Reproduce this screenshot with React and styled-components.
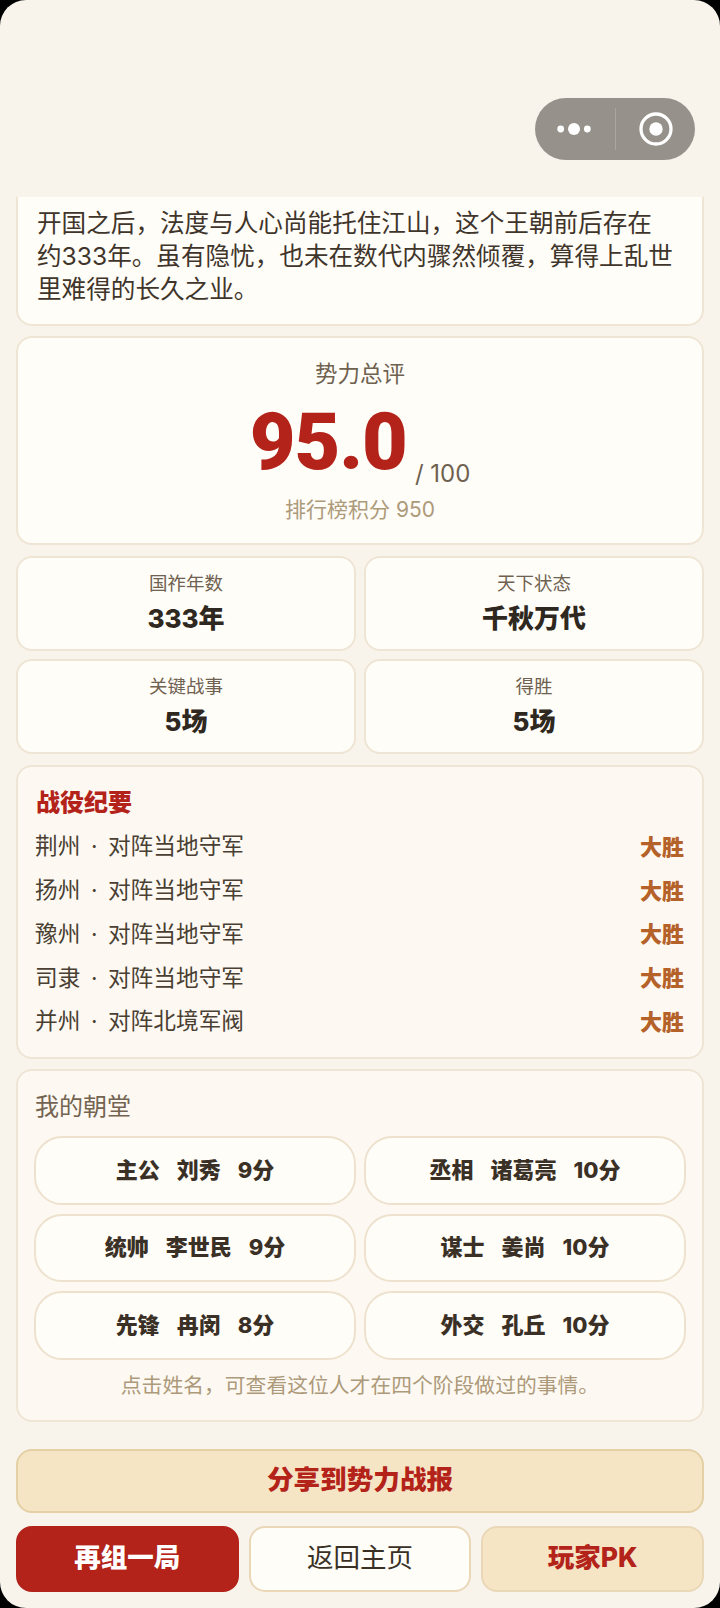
import React from "react";
import styled, { createGlobalStyle } from "styled-components";

const GlobalStyle = createGlobalStyle`
  html, body {
    margin: 0;
    padding: 0;
    background: #000;
  }
  * {
    box-sizing: border-box;
  }
`;

const Page = styled.div`
  width: 720px;
  height: 1608px;
  overflow: hidden;
  border-radius: 26px;
  background: #f8f4ec;
  font-family: "Inter", "Noto Sans CJK SC", sans-serif;
  color: #3a3026;
`;

const NavBar = styled.div`
  height: 197px;
  padding: 98px 25px 0 0;
  display: flex;
  justify-content: flex-end;
  align-items: flex-start;
`;

const Capsule = styled.div`
  width: 160px;
  height: 62px;
  border-radius: 31px;
  background: #96928b;
  display: flex;
  align-items: center;
`;

const CapsulePart = styled.div`
  flex: 1;
  display: flex;
  align-items: center;
  justify-content: center;
  padding: ${(p) => (p.$side === "left" ? "0 2px 0 0" : "0 0 0 2px")};
`;

const CapsuleLine = styled.div`
  width: 1px;
  height: 42px;
  background: #aaa69f;
`;

const Content = styled.div`
  padding: 0 16px;
  display: flex;
  flex-direction: column;
`;

const Card = styled.div`
  background: ${(p) => (p.$tint ? "#fdf9f2" : "#fffdf8")};
  border: 2px solid #efe5d5;
  border-radius: 16px;
  margin-top: ${(p) => p.$gap ?? 11}px;
`;

const StoryCard = styled(Card)`
  margin-top: 0;
  border-top: none;
  border-radius: 0 0 16px 16px;
  height: 129px;
  padding: 10px 26px 0 19px;
  font-size: 24.6px;
  line-height: 33px;
  color: #3f352b;
`;

const ScoreCard = styled(Card)`
  height: 209px;
  padding-top: 20px;
  text-align: center;
`;

const ScoreTitle = styled.div`
  font-size: 22.5px;
  line-height: 32px;
  color: #6f6150;
`;

const ScoreRow = styled.div`
  display: flex;
  justify-content: center;
  align-items: flex-end;
  height: 96px;
`;

const ScoreValue = styled.span`
  font-family: "Roboto", sans-serif;
  font-size: 79px;
  line-height: 88px;
  font-weight: 900;
  color: #b3231a;
  letter-spacing: -1px;
`;

const ScoreMax = styled.span`
  font-size: 24px;
  line-height: 24px;
  color: #6f6150;
  margin-left: 8px;
`;

const ScorePoints = styled.div`
  font-size: 21px;
  line-height: 30px;
  margin-top: 9px;
  color: #ad9a7a;
`;

const StatGrid = styled.div`
  display: grid;
  grid-template-columns: 1fr 1fr;
  gap: 8px;
  margin-top: 11px;
`;

const StatCard = styled(Card)`
  margin-top: 0;
  height: 95px;
  padding-top: 12px;
  text-align: center;
`;

const StatLabel = styled.div`
  font-size: 18.5px;
  line-height: 26px;
  color: #6f6150;
`;

const StatValue = styled.div`
  font-size: 26px;
  line-height: 36px;
  margin-top: 4.5px;
  font-weight: 800;
  color: #2f2820;
`;

const BattleCard = styled(Card)`
  height: 294px;
  padding: 19px 18px 0 17px;
`;

const BattleTitle = styled.div`
  font-size: 24px;
  line-height: 34px;
  font-weight: 800;
  color: #b3231a;
  margin-bottom: 3px;
  padding-left: 1px;
`;

const BattleRow = styled.div`
  display: flex;
  justify-content: space-between;
  align-items: center;
  height: 43.75px;
  font-size: 22.7px;
  color: #4a3f33;
`;

const BattleDot = styled.span`
  margin: 0 10.5px;
`;

const BattleResult = styled.span`
  font-size: 22px;
  font-weight: 800;
  color: #b5622a;
`;

const CourtCard = styled(Card)`
  height: 353px;
  padding: 19px 16px 0;
`;

const CourtTitle = styled.div`
  font-size: 24px;
  line-height: 34px;
  color: #736350;
  padding-left: 1px;
  margin-bottom: 12px;
`;

const CourtGrid = styled.div`
  display: grid;
  grid-template-columns: 1fr 1fr;
  gap: 9px 8px;
`;

const Officer = styled.div`
  height: 68.5px;
  padding-bottom: 5px;
  border: 2px solid #eee2cf;
  border-radius: 28px;
  background: #fffdf8;
  display: flex;
  justify-content: center;
  align-items: center;
  gap: 17px;
  font-size: 22px;
  font-weight: 800;
  color: #3a3026;
`;

const CourtNote = styled.div`
  margin-top: 11px;
  text-align: center;
  font-size: 20.8px;
  line-height: 30px;
  color: #ad9a7a;
`;

const ShareButton = styled.div`
  margin-top: 27px;
  height: 64px;
  padding-bottom: 8px;
  border: 2px solid #e5cfa5;
  border-radius: 16px;
  background: #f6e5c4;
  display: flex;
  justify-content: center;
  align-items: center;
  font-size: 26.6px;
  font-weight: 800;
  color: #b3231a;
`;

const ActionRow = styled.div`
  margin-top: 13px;
  display: grid;
  grid-template-columns: repeat(3, 1fr);
  gap: 10px;
`;

const ActionButton = styled.div`
  height: 66px;
  padding-bottom: 7px;
  border-radius: 16px;
  display: flex;
  justify-content: center;
  align-items: center;
  font-size: 26.5px;
  font-weight: ${(p) => (p.$kind === "plain" ? 400 : 800)};
  color: ${(p) => (p.$kind === "primary" ? "#fff" : p.$kind === "plain" ? "#3a3026" : "#b3231a")};
  background: ${(p) => (p.$kind === "primary" ? "#b3231a" : p.$kind === "plain" ? "#fffdf8" : "#f6e5c4")};
  border: 2px solid ${(p) => (p.$kind === "primary" ? "#b3231a" : "#e9d7b8")};
`;

const stats = [
  ["国祚年数", "333年"],
  ["天下状态", "千秋万代"],
  ["关键战事", "5场"],
  ["得胜", "5场"],
];

const battles = [
  ["荆州", "对阵当地守军"],
  ["扬州", "对阵当地守军"],
  ["豫州", "对阵当地守军"],
  ["司隶", "对阵当地守军"],
  ["并州", "对阵北境军阀"],
];

const officers = [
  ["主公", "刘秀", "9分"],
  ["丞相", "诸葛亮", "10分"],
  ["统帅", "李世民", "9分"],
  ["谋士", "姜尚", "10分"],
  ["先锋", "冉闵", "8分"],
  ["外交", "孔丘", "10分"],
];

export default function App() {
  return (
    <>
      <GlobalStyle />
      <Page>
        <NavBar>
          <Capsule>
            <CapsulePart $side="left">
              <svg width="40" height="14" viewBox="0 0 40 14">
                <circle cx="6.7" cy="7" r="3.4" fill="#fff" />
                <circle cx="20" cy="7" r="6" fill="#fff" />
                <circle cx="33.3" cy="7" r="3.4" fill="#fff" />
              </svg>
            </CapsulePart>
            <CapsuleLine />
            <CapsulePart $side="right">
              <svg width="36" height="36" viewBox="0 0 36 36">
                <circle cx="18" cy="18" r="15" fill="none" stroke="#fff" strokeWidth="3.3" />
                <circle cx="18" cy="18" r="6.7" fill="#fff" />
              </svg>
            </CapsulePart>
          </Capsule>
        </NavBar>
        <Content>
          <StoryCard>
            开国之后，法度与人心尚能托住江山，这个王朝前后存在约333年。虽有隐忧，也未在数代内骤然倾覆，算得上乱世里难得的长久之业。
          </StoryCard>
          <ScoreCard $gap={10}>
            <ScoreTitle>势力总评</ScoreTitle>
            <ScoreRow>
              <ScoreValue>95.0</ScoreValue>
              <ScoreMax>/ 100</ScoreMax>
            </ScoreRow>
            <ScorePoints>排行榜积分 950</ScorePoints>
          </ScoreCard>
          <StatGrid>
            {stats.map(([label, value]) => (
              <StatCard key={label}>
                <StatLabel>{label}</StatLabel>
                <StatValue>{value}</StatValue>
              </StatCard>
            ))}
          </StatGrid>
          <BattleCard $tint>
            <BattleTitle>战役纪要</BattleTitle>
            {battles.map(([place, foe]) => (
              <BattleRow key={place}>
                <span>
                  {place}
                  <BattleDot>·</BattleDot>
                  {foe}
                </span>
                <BattleResult>大胜</BattleResult>
              </BattleRow>
            ))}
          </BattleCard>
          <CourtCard $tint $gap={10}>
            <CourtTitle>我的朝堂</CourtTitle>
            <CourtGrid>
              {officers.map(([role, name, score]) => (
                <Officer key={role}>
                  <span>{role}</span>
                  <span>{name}</span>
                  <span>{score}</span>
                </Officer>
              ))}
            </CourtGrid>
            <CourtNote>点击姓名，可查看这位人才在四个阶段做过的事情。</CourtNote>
          </CourtCard>
          <ShareButton>分享到势力战报</ShareButton>
          <ActionRow>
            <ActionButton $kind="primary">再组一局</ActionButton>
            <ActionButton $kind="plain">返回主页</ActionButton>
            <ActionButton $kind="accent">玩家PK</ActionButton>
          </ActionRow>
        </Content>
      </Page>
    </>
  );
}
